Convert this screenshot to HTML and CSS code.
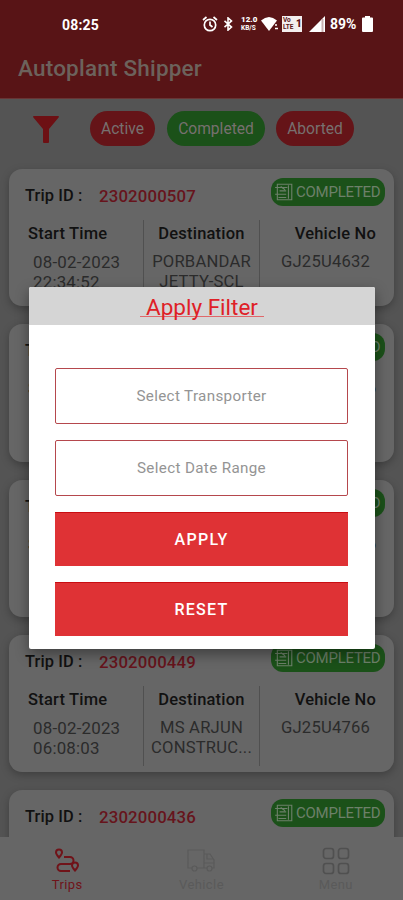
FILE: index.html
```html
<!DOCTYPE html>
<html lang="en">
<head>
    <meta charset="UTF-8">
    <meta name="viewport" content="width=device-width, initial-scale=1.0">
    <title>Autoplant Shipper</title>
    <link rel="stylesheet" href="styles.css">
</head>
<body>
<!-- shared badge icon -->
<svg class="sprite" width="0" height="0">
    <symbol id="doc" viewBox="0 0 18 18">
        <path d="M3 2h13v14H3zM1 5h11M5 8h6M1 11h10M4 14h7M6 4l4 3M13 3v12" fill="none" stroke="currentColor" stroke-width="1"/>
    </symbol>
</svg>

<div class="app">
    <header class="header">
        <div class="status-bar">
            <span class="clock">08:25</span>
            <div class="status-icons">
                <svg width="16" height="18" viewBox="0 0 16 18">
                    <g fill="none" stroke="#fff" stroke-width="1.7">
                        <circle cx="8" cy="10" r="5.7"/>
                        <path d="M1 5l3.5-3M15 5l-3.5-3M8 6.5V10l2.5 2"/>
                    </g>
                </svg>
                <svg class="bluetooth" width="10" height="14" viewBox="0 0 10 16">
                    <path d="M1 4.5l8 7-4 3.5V1l4 3.5-8 7" fill="none" stroke="#fff" stroke-width="1.8"/>
                </svg>
                <div class="net-speed"><b>12.0</b><span>KB/S</span></div>
                <svg class="wifi" width="18" height="16" viewBox="0 0 18 16">
                    <path d="M0 4.5Q8 -2.5 16 4.5L8 15z" fill="#fff"/>
                    <path d="M14 9h2M14 12.5h3" stroke="#fff" stroke-width="1.5"/>
                </svg>
                <div class="volte"><span>Vo</span><span>LTE</span><b>1</b></div>
                <svg class="signal" width="16" height="16" viewBox="0 0 16 16">
                    <path d="M0 16L16 0v16z" fill="#fff"/>
                    <path d="M13.5 3v13" stroke="#c9b0b1" stroke-width="2"/>
                </svg>
                <span class="percent">89%</span>
                <svg class="battery" width="11" height="16" viewBox="0 0 11 16">
                    <path d="M3 0h5v1.5h2q1 0 1 1V15q0 1-1 1H1q-1 0-1-1V2.5q0-1 1-1h2z" fill="#fff"/>
                </svg>
            </div>
        </div>
        <h1 class="app-title">Autoplant Shipper</h1>
    </header>

    <main class="content">
        <div class="filters">
            <svg class="funnel" width="26" height="27" viewBox="0 0 26 27">
                <path d="M1 0h24q1.5 0 .6 1.5L16 13v13q0 1-1 1h-4q-1 0-1-1V13L.4 1.5Q-.5 0 1 0z" fill="#6d1014"/>
            </svg>
            <span class="pill pill-active">Active</span>
            <span class="pill pill-completed">Completed</span>
            <span class="pill pill-aborted">Aborted</span>
        </div>

        <div class="trips">
            <article class="card">
                <div class="card-top">
                    <span class="label">Trip ID :</span><span class="trip-id">2302000507</span>
                    <span class="badge"><svg width="20" height="20"><use href="#doc"/></svg>COMPLETED</span>
                </div>
                <div class="card-cols">
                    <div class="col start"><h3>Start Time</h3><p>08-02-2023<br>22:34:52</p></div>
                    <div class="col dest"><h3>Destination</h3><p>PORBANDAR<br>JETTY-SCL</p></div>
                    <div class="col vehicle"><h3>Vehicle No</h3><p>GJ25U4632</p></div>
                </div>
            </article>
            <article class="card">
                <div class="card-top">
                    <span class="label">Trip ID :</span>
                    <span class="badge"><svg width="20" height="20"><use href="#doc"/></svg>COMPLETED</span>
                </div>
                <div class="card-cols">
                    <div class="col start"><h3>Start Time</h3></div>
                    <div class="col dest"></div>
                    <div class="col vehicle"><h3>Vehicle No</h3></div>
                </div>
            </article>
            <article class="card">
                <div class="card-top">
                    <span class="label">Trip ID :</span>
                    <span class="badge"><svg width="20" height="20"><use href="#doc"/></svg>COMPLETED</span>
                </div>
                <div class="card-cols">
                    <div class="col start"><h3>Start Time</h3></div>
                    <div class="col dest"></div>
                    <div class="col vehicle"><h3>Vehicle No</h3></div>
                </div>
            </article>
            <article class="card">
                <div class="card-top">
                    <span class="label">Trip ID :</span><span class="trip-id">2302000449</span>
                    <span class="badge"><svg width="20" height="20"><use href="#doc"/></svg>COMPLETED</span>
                </div>
                <div class="card-cols">
                    <div class="col start"><h3>Start Time</h3><p>08-02-2023<br>06:08:03</p></div>
                    <div class="col dest"><h3>Destination</h3><p>MS ARJUN<br>CONSTRUC...</p></div>
                    <div class="col vehicle"><h3>Vehicle No</h3><p>GJ25U4766</p></div>
                </div>
            </article>
            <article class="card">
                <div class="card-top">
                    <span class="label">Trip ID :</span><span class="trip-id">2302000436</span>
                    <span class="badge"><svg width="20" height="20"><use href="#doc"/></svg>COMPLETED</span>
                </div>
            </article>
        </div>
    </main>

    <nav class="tabs">
        <a class="tab selected">
            <svg width="26" height="26" viewBox="0 0 26 26">
                <g fill="none" stroke="currentColor" stroke-width="2">
                    <path d="M10 9h6a3.5 3.5 0 0 1 0 7H7a3.3 3.3 0 0 0 0 7h9"/>
                    <path d="M5 9.5Q2 6 2 4.5a3 3 0 0 1 6 0Q8 6 5 9.5zM21 22.5q-3-3.5-3-5a3 3 0 0 1 6 0q0 1.500-3 5z"/>
                </g>
            </svg>
            <span>Trips</span>
        </a>
        <a class="tab">
            <svg width="28" height="26" viewBox="0 0 28 26">
                <g fill="none" stroke="currentColor" stroke-width="1.2">
                    <path d="M5 20H1V2h16v18H10M17 6h6l4 6v8h-2M20 20h-3M17 15h10M20 6v5h6"/>
                    <circle cx="7.5" cy="20.5" r="2.5"/><circle cx="22.5" cy="20.5" r="2.5"/>
                </g>
            </svg>
            <span>Vehicle</span>
        </a>
        <a class="tab menu">
            <svg width="28" height="28" viewBox="0 0 28 28">
                <g fill="none" stroke="currentColor" stroke-width="1.7">
                    <rect x="1.5" y="1.5" width="10" height="10" rx="2.5"/>
                    <rect x="16.5" y="1.5" width="10" height="10" rx="2.5"/>
                    <rect x="1.5" y="16.5" width="10" height="10" rx="2.5"/>
                    <rect x="16.5" y="16.5" width="10" height="10" rx="2.5"/>
                </g>
            </svg>
            <span>Menu</span>
        </a>
    </nav>

    <!-- Filter dialog -->
    <div class="dialog">
        <h2 class="dialog-title"><span>Apply Filter</span></h2>
        <div class="dialog-body">
            <button class="field" type="button">Select Transporter</button>
            <button class="field" type="button">Select Date Range</button>
            <button class="btn" type="button">APPLY</button>
            <button class="btn" type="button">RESET</button>
        </div>
    </div>
</div>
</body>
</html>
```
FILE: styles.css
```css
* {
    box-sizing: border-box;
}

body {
    margin: 0;
    font-family: Roboto, "Liberation Sans", sans-serif;
}

h1, h2, h3, p {
    margin: 0;
}

.sprite {
    position: absolute;
}

.app {
    position: relative;
    display: flex;
    flex-direction: column;
    height: 900px;
    overflow: hidden;
    background: #545454;
}

/* Header */
.header {
    flex: none;
    height: 99px;
    background: #581416;
    border-bottom: 1px solid #683535;
}

.status-bar {
    display: flex;
    align-items: center;
    justify-content: space-between;
    height: 48px;
    padding: 0 30px 0 62px;
    color: #fff;
    font-size: 14px;
    font-weight: 700;
}

.clock {
    padding-top: 1px;
    letter-spacing: 0.2px;
}

.status-icons {
    display: flex;
    align-items: center;
}

.bluetooth {
    margin-left: 5px;
}

.net-speed {
    display: flex;
    flex-direction: column;
    gap: 1px;
    width: 18px;
    margin-left: 8px;
    font-size: 8px;
    line-height: 8px;
}

.net-speed span {
    font-size: 6.5px;
    line-height: 7px;
}

.wifi {
    margin-left: 2px;
}

.volte {
    display: grid;
    grid-template-columns: 13px 6px;
    width: 20px;
    height: 16px;
    margin-left: 3px;
    padding: 1px;
    background: #f3eeee;
    color: #581416;
    font-size: 6.5px;
    line-height: 7px;
}

.volte b {
    grid-area: 1 / 2 / 3 / 3;
    font-size: 10px;
    line-height: 14px;
}

.signal {
    margin-left: 7px;
}

.percent {
    width: 27px;
    margin-left: 5px;
}

.battery {
    margin-left: 5px;
}

.app-title {
    padding: 7px 18px;
    color: #6c625c;
    font-size: 22.5px;
    font-weight: 500;
    letter-spacing: 0.2px;
    line-height: 27px;
}

/* Status filters */
.content {
    flex: 1;
    min-height: 0;
    overflow: hidden;
}

.filters {
    display: flex;
    align-items: center;
    height: 70px;
    padding: 0 0 11px 33px;
}

.funnel {
    margin-top: 2px;
}

.pill {
    height: 35px;
    border-radius: 18px;
    color: #77706f;
    font-size: 15.6px;
    line-height: 36px;
    text-align: center;
}

.pill-active {
    width: 65px;
    margin-left: 31px;
    background: #651418;
}

.pill-completed {
    width: 98px;
    margin-left: 12px;
    background: #1b5119;
}

.pill-aborted {
    width: 78px;
    margin-left: 11px;
    background: #651418;
}

/* Trip cards */
.trips {
    display: flex;
    flex-direction: column;
    gap: 18px;
    padding: 0 9px;
}

.card {
    flex: none;
    height: 137.3px;
    padding: 9px 9px 0 16px;
    border-radius: 13px;
    background: #666;
    box-shadow: 0 3px 9px rgba(0, 0, 0, 0.25);
}

.card-top {
    display: flex;
    height: 42px;
    color: #111;
    font-size: 16.4px;
    line-height: 36px;
}

.label {
    width: 74px;
    font-weight: 500;
    letter-spacing: 0.1px;
}

.trip-id {
    color: #66141c;
    font-size: 16.8px;
    font-weight: 500;
    letter-spacing: 0.15px;
}

.badge {
    display: flex;
    align-items: center;
    gap: 2px;
    width: 114px;
    height: 28px;
    margin-left: auto;
    padding-left: 3px;
    border-radius: 12px;
    background: #1b5119;
    color: #6d806a;
    font-size: 15px;
    letter-spacing: -0.25px;
    line-height: 30px;
}

.badge svg {
    flex: none;
}

.card-cols {
    display: grid;
    grid-template-columns: 119px 116px 1fr;
    height: 80px;
}

.col h3 {
    color: #111;
    font-size: 16.5px;
    font-weight: 500;
    letter-spacing: 0.2px;
    line-height: 28px;
}

.col p {
    color: #2b2b2b;
    font-size: 16.6px;
    letter-spacing: 0.2px;
    line-height: 20px;
    padding-top: 4px;
}

.start {
    padding-left: 3px;
    border-right: 1px solid #505050;
}

.start p {
    padding-left: 5px;
    font-size: 16.9px;
}

.dest {
    border-right: 1px solid #505050;
    text-align: center;
}

.vehicle {
    padding-right: 9px;
    text-align: right;
}

.vehicle p {
    padding-right: 6px;
}

/* Bottom tabs */
.tabs {
    flex: none;
    display: grid;
    grid-template-columns: repeat(3, 1fr);
    height: 63px;
    background: #666;
}

.tab {
    display: flex;
    flex-direction: column;
    align-items: center;
    padding-top: 10px;
    color: #5a5a5a;
    font-size: 13px;
    line-height: 16px;
    letter-spacing: 0.4px;
}

.tab svg {
    height: 28px;
    margin-bottom: 2px;
}

.tab.menu svg {
    color: #505050;
}

.tab.selected {
    color: #701319;
}

/* Dialog */
.dialog {
    position: absolute;
    top: 287px;
    left: 29px;
    width: 346px;
    height: 362px;
    border-radius: 2px;
    background: #fff;
    box-shadow: 0 5px 14px rgba(0, 0, 0, 0.4);
    overflow: hidden;
}

.dialog-title {
    height: 38px;
    background: #d5d5d5;
    color: #df2027;
    font-size: 22.5px;
    font-weight: 400;
    line-height: 40px;
    text-align: center;
}

.dialog-title span {
    display: inline-block;
    height: 30px;
    padding: 0 6px;
    border-bottom: 1px solid #e0686b;
}

.dialog-body {
    display: flex;
    flex-direction: column;
    padding: 43px 26px 0;
}

.field,
.btn {
    width: 293px;
    padding: 0;
    font-family: inherit;
}

.field {
    height: 56px;
    margin-bottom: 16px;
    border: 1px solid #b5484d;
    border-radius: 2px;
    background: #fff;
    color: #949494;
    font-size: 15.2px;
    letter-spacing: 0.35px;
}

.btn {
    height: 54px;
    margin-bottom: 16px;
    border: 0;
    border-top: 1px solid #c90d12;
    background: #df3235;
    color: #fff;
    font-size: 16px;
    font-weight: 500;
    letter-spacing: 1.3px;
}
```
